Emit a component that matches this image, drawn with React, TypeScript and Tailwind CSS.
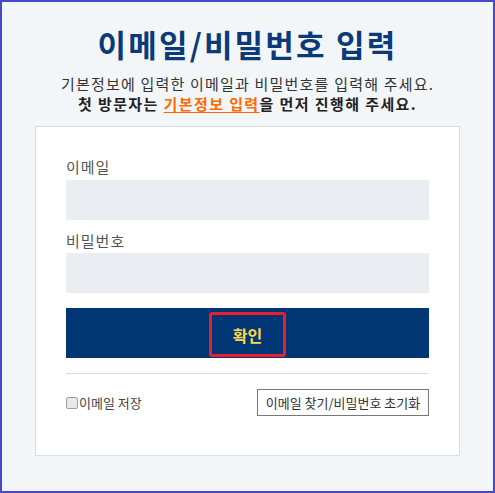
export default function App() {
  return (
    <div
      className="flex h-[493px] w-[495px] flex-col items-center border-2 border-[#4747c9] bg-[#f3f6f9]"
      style={{ fontFamily: '"Noto Sans CJK KR", "Noto Sans", sans-serif' }}
    >
      <h1 className="mt-[22px] text-[31px] font-bold leading-[40px] tracking-[2.2px] text-[#0a3a78]">
        이메일/비밀번호 입력
      </h1>
      <p className="mt-[10px] text-center text-[15px] leading-[20px] tracking-[1.2px] text-[#333]">
        기본정보에 입력한 이메일과 비밀번호를 입력해 주세요.
        <br />
        <span className="font-bold tracking-[1.4px] text-[#222]">
          첫 방문자는{" "}
          <a className="text-[#ff6a00] underline underline-offset-2">기본정보 입력</a>을 먼저 진행해
          주세요.
        </span>
      </p>

      {/* login card */}
      <div className="mt-[12px] h-[330px] w-[425px] border border-[#d6dde5] bg-white px-[30px] pt-[30px]">
        <label className="block text-[15px] leading-[20px] tracking-[1px] text-[#555]">이메일</label>
        <div className="mt-[3px] h-[40px] w-full bg-[#eaedf2]" />
        <label className="mt-[11px] block text-[15px] leading-[20px] tracking-[1px] text-[#555]">비밀번호</label>
        <div className="mt-[2px] h-[40px] w-full bg-[#eaedf2]" />

        <button className="mt-[15px] flex h-[50px] w-full items-end justify-center bg-[#003673] pb-[1px]">
          <span className="flex h-[45px] w-[77px] items-center justify-center rounded-[3px] border-[3px] border-[#ea1f2b] text-[16px] font-bold text-[#ffd84a]">
            확인
          </span>
        </button>

        <div className="mt-[15px] border-t border-[#d6dde5]" />

        <div className="mt-[15px] flex items-center justify-between">
          <label className="flex items-center text-[13px] text-[#444]">
            <span className="mr-[1px] h-[12px] w-[12px] rounded-[2px] border border-[#a0a0a0] bg-[#e8e8e8]" />
            이메일 저장
          </label>
          <button className="h-[27px] w-[172px] border border-[#777] bg-white text-[13px] text-[#333]">
            이메일 찾기/비밀번호 초기화
          </button>
        </div>
      </div>
    </div>
  );
}
